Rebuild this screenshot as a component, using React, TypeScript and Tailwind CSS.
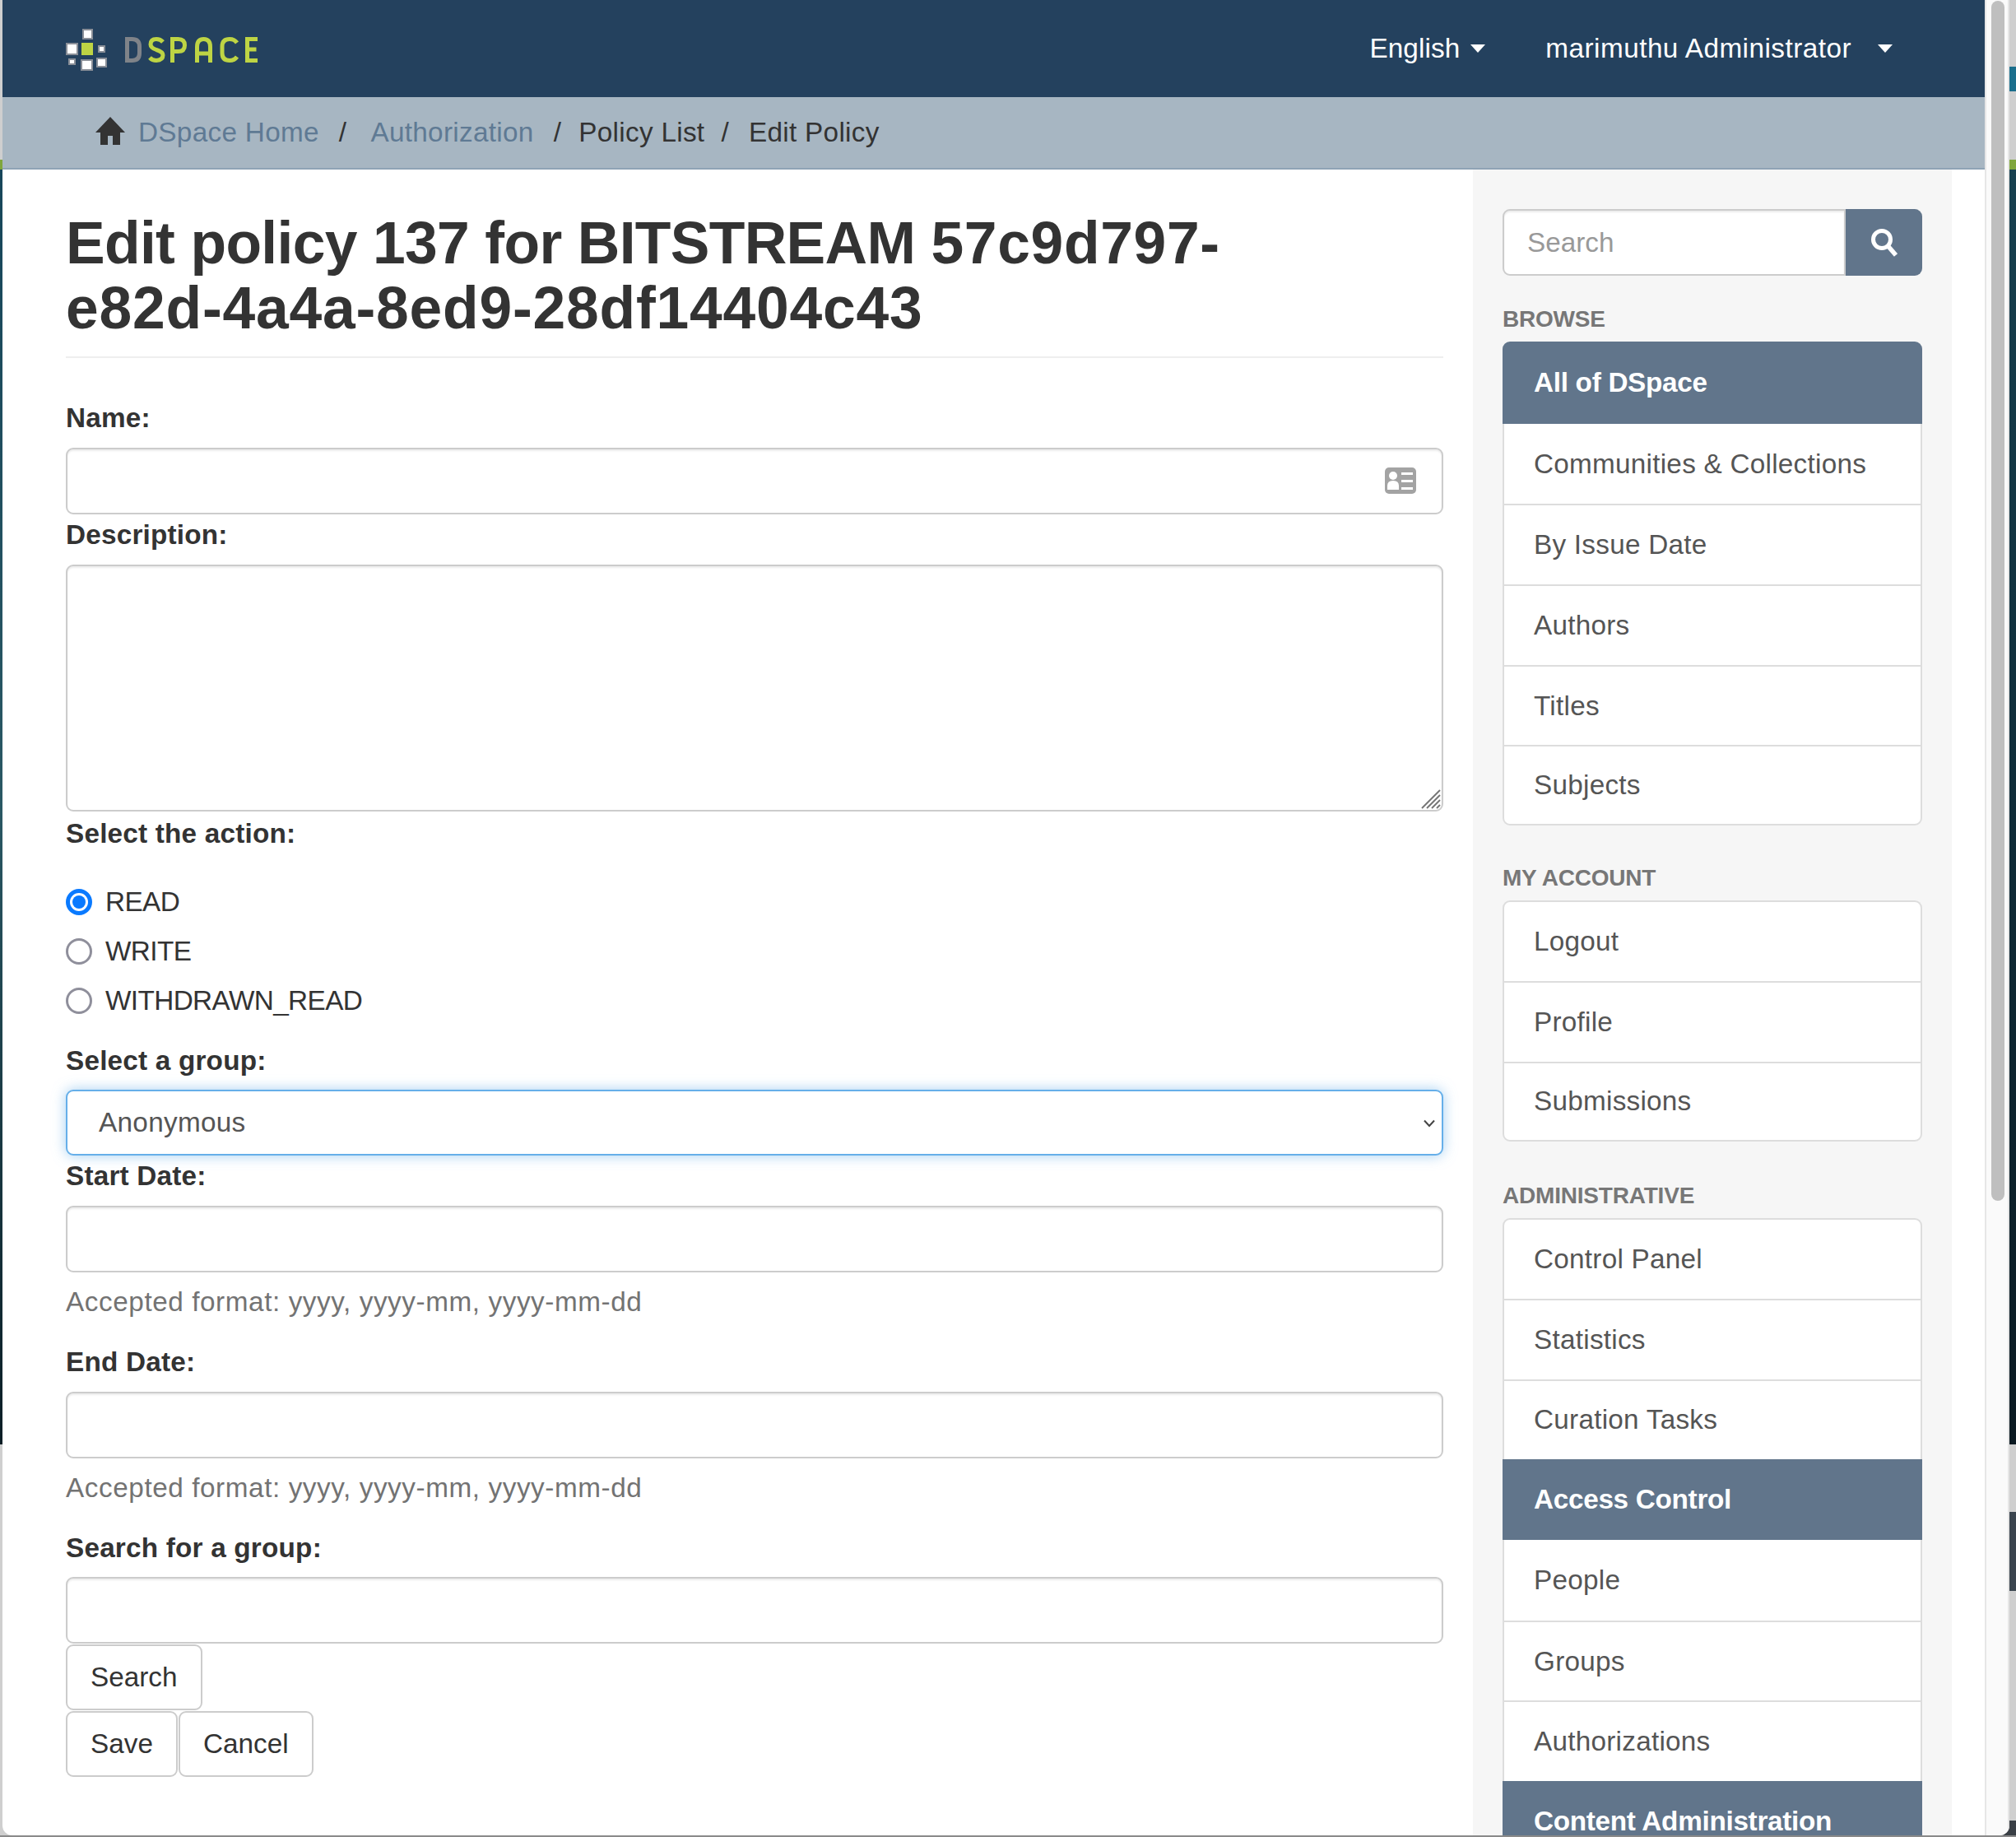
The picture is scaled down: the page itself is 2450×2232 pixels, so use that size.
import React, { FC } from "react";

const font = "font-['Liberation_Sans',Arial,sans-serif]";

const Logo: FC = () => (
  <svg width="240" height="60" viewBox="0 0 240 60" className="block mt-[2px]">
    <rect x="21" y="6" width="11" height="11" fill="#fff" stroke="#8a8f98" strokeWidth="2" />
    <rect x="1" y="23" width="13" height="13" fill="#fff" stroke="#8a8f98" strokeWidth="2" />
    <rect x="19" y="22" width="14" height="15" fill="#bed444" />
    <rect x="40" y="26" width="7" height="7" fill="#fff" stroke="#8a8f98" strokeWidth="2" />
    <rect x="4" y="42" width="7" height="6" fill="#fff" stroke="#8a8f98" strokeWidth="2" />
    <rect x="19" y="43" width="13" height="12" fill="#fff" stroke="#8a8f98" strokeWidth="2" />
    <rect x="38" y="41" width="11" height="10" fill="#fff" stroke="#8a8f98" strokeWidth="2" />
    <path d="M74.500 17.500h6q9 0 9 9v8q0 9-9 9h-6z" fill="none" stroke="#7f8389" strokeWidth="5" />
    <path d="M118 21q-3-3.500-8-3.500-7 0-7 6.500 0 4 7 6.500 8 2.500 8 6.500 0 6-8 6.500-5 0-8-3.500" fill="none" stroke="#bed444" strokeWidth="5" />
    <path d="M129.500 46V17.500h7q8 0 8 7.500t-8 7.500h-7" fill="none" stroke="#bed444" strokeWidth="5" />
    <path d="M159.500 46V27q0-9.500 8-9.500t8 9.500v19M159.500 35h16" fill="none" stroke="#bed444" strokeWidth="5" />
    <path d="M208 22q-3-4.500-9-4.500-9 0-9 9v8q0 9 9 9 6 0 9-4.500" fill="none" stroke="#bed444" strokeWidth="5" />
    <path d="M233 17.500h-12.500v26h12.500M220.500 30h11" fill="none" stroke="#bed444" strokeWidth="5" />
  </svg>
);

const Caret: FC = () => (
  <span className="block w-0 h-0 border-x-[9px] border-x-transparent border-t-[10px] border-t-white" />
);

const Breadcrumbs: FC = () => (
  <div className="h-[88px] bg-[#a7b6c2] border-b-2 border-[#8fa3b5] flex items-center pl-[113px] text-[33.300px] leading-none tracking-[0.3px]">
    <svg width="36" height="34" viewBox="0 0 36 34" className="mr-[16px] mb-[4px]">
      <path d="M18 0 36 19H30V34H21V23H15V34H6V19H0z" fill="#333" />
    </svg>
    <span className="text-[#5f7a94]">DSpace Home</span>
    <span className="text-[#333] ml-[24px] mr-[29px]">/</span>
    <span className="text-[#5f7a94]">Authorization</span>
    <span className="text-[#333] ml-[24px] mr-[21px]">/</span>
    <span className="text-[#333]">Policy List</span>
    <span className="text-[#333] ml-[20px] mr-[24px]">/</span>
    <span className="text-[#333]">Edit Policy</span>
  </div>
);

const TextField: FC<{ icon?: boolean }> = ({ icon }) => (
  <div className="relative h-[81px] rounded-[9px] border-2 border-[#ccc] bg-white shadow-[inset_0_2px_2px_rgba(0,0,0,0.075)]">
    {icon && (
      <svg width="38" height="32" viewBox="0 0 38 32" className="absolute right-[31px] top-[22px]">
        <rect width="38" height="32" rx="5" fill="#a3a3a3" />
        <circle cx="10" cy="10" r="5" fill="#fff" />
        <path d="M3 27v-5q0-6 7-6t7 6v5z" fill="#fff" />
        <path d="M20 6h14v3H20zM20 15h14v3H20zM20 24h14v3H20z" fill="#fff" />
      </svg>
    )}
  </div>
);

const FieldLabel: FC<{ children: React.ReactNode; className?: string }> = ({ children, className }) => (
  <div className={`font-bold text-[33.300px] leading-[36px] tracking-[0.2px] text-[#333] ${className ?? ""}`}>{children}</div>
);

const Radio: FC<{ label: string; checked?: boolean }> = ({ label, checked }) => (
  <div className="h-[60px] flex items-center text-[33.300px] leading-none tracking-[-0.6px] text-[#333]">
    {checked ? (
      <span className="w-[32px] h-[32px] rounded-full bg-white border-[5px] border-[#0a7aff] flex items-center justify-center">
        <span className="w-[16px] h-[16px] rounded-full bg-[#0a7aff]" />
      </span>
    ) : (
      <span className="w-[32px] h-[32px] rounded-full bg-white border-[3px] border-[#8f8f9b]" />
    )}
    <span className="ml-[16px]">{label}</span>
  </div>
);

const Btn: FC<{ label: string }> = ({ label }) => (
  <div className="h-[80px] px-[28px] flex items-center rounded-[9px] border-2 border-[#ccc] bg-white text-[33.300px] text-[#333]">
    {label}
  </div>
);

const HelpText: FC = () => (
  <div className="text-[33.300px] leading-[36px] tracking-[0.57px] text-[#737373]">Accepted format: yyyy, yyyy-mm, yyyy-mm-dd</div>
);

const MainForm: FC = () => (
  <div className="w-[1787px] pl-[77px] pr-[36px]">
    <h1 className="pt-[50px] font-bold text-[71.400px] leading-[79px] text-[#333] border-b-2 border-[#eee] pb-[19px]">
      <span className="tracking-[-0.65px]">Edit policy 137 for BITSTREAM </span>
      <span className="tracking-[0.65px]">57c9d797-</span>
      <br />
      <span className="tracking-[0.8px]">e82d-4a4a-8ed9-28df14404c43</span>
    </h1>
    <FieldLabel className="mt-[55px]">Name:</FieldLabel>
    <div className="mt-[18px]"><TextField icon /></div>
    <FieldLabel className="mt-[7px]">Description:</FieldLabel>
    <div className="mt-[18px] relative h-[300px] rounded-[9px] border-2 border-[#ccc] bg-white shadow-[inset_0_2px_2px_rgba(0,0,0,0.075)]">
      <svg width="26" height="26" viewBox="0 0 26 26" className="absolute right-0 bottom-0">
        <path d="M2 24 24 2M8 24 24 8M14 24 24 14M20 24 24 20" stroke="#777" strokeWidth="2" fill="none" />
      </svg>
    </div>
    <FieldLabel className="mt-[9px]">Select the action:</FieldLabel>
    <div className="mt-[35px]">
      <Radio label="READ" checked />
      <Radio label="WRITE" />
      <Radio label="WITHDRAWN_READ" />
    </div>
    <FieldLabel className="mt-[25px]">Select a group:</FieldLabel>
    <div className="mt-[17px] relative h-[80px] rounded-[9px] border-2 border-[#66afe9] bg-white shadow-[0_0_16px_rgba(102,175,233,0.6)] flex items-center pl-[38px] text-[33.300px] tracking-[0.3px] text-[#555]">
      Anonymous
      <svg width="14" height="10" viewBox="0 0 14 10" className="absolute right-[8px] top-[34px]">
        <path d="M1 1.500 7 8l6-6.500" fill="none" stroke="#444" strokeWidth="2" />
      </svg>
    </div>
    <FieldLabel className="mt-[7px]">Start Date:</FieldLabel>
    <div className="mt-[18px]"><TextField /></div>
    <div className="mt-[18px]"><HelpText /></div>
    <FieldLabel className="mt-[37px]">End Date:</FieldLabel>
    <div className="mt-[18px]"><TextField /></div>
    <div className="mt-[18px]"><HelpText /></div>
    <FieldLabel className="mt-[37px]">Search for a group:</FieldLabel>
    <div className="mt-[17px]"><TextField /></div>
    <div className="mt-[1px] flex"><Btn label="Search" /></div>
    <div className="mt-[1px] flex gap-[1px]">
      <Btn label="Save" />
      <Btn label="Cancel" />
    </div>
  </div>
);

type Item = { label: string; active?: boolean };

const NavGroup: FC<{ title: string; items: Item[]; open?: boolean }> = ({ title, items, open }) => (
  <div>
    <div className="h-[36px] leading-[36px] font-bold text-[28px] text-[#777] uppercase tracking-[-0.2px]">{title}</div>
    <div className="mt-[9px]">
      {items.map((it, idx) => {
        const first = idx === 0;
        const last = idx === items.length - 1 && !open;
        return (
          <div
            key={it.label}
            className={`${it.active && first ? "h-[99.700px]" : "h-[97.700px]"} flex items-center text-[33.300px] ${first ? "rounded-t-[9px]" : ""} ${last ? "rounded-b-[9px]" : ""} ${
              it.active
                ? "pl-[38px] bg-[#61758b] text-white font-bold tracking-[-0.3px]"
                : `pl-[36px] bg-white text-[#555] tracking-[0.25px] border-x-2 border-[#ddd] ${last ? "border-b-2" : ""} ${
                    idx === 0 || !items[idx - 1].active ? "border-t-2" : ""
                  }`
            }`}
          >
            {it.label}
          </div>
        );
      })}
    </div>
  </div>
);

const Sidebar: FC = () => (
  <div className="w-[582px] h-full bg-[#f6f6f6] pl-[36px] pr-[36px] overflow-hidden">
    <div className="mt-[48px] flex h-[81px]">
      <div className="flex-1 rounded-l-[9px] border-2 border-[#ccc] bg-white flex items-center pl-[28px] text-[33.300px] text-[#999] shadow-[inset_0_2px_2px_rgba(0,0,0,0.075)]">
        Search
      </div>
      <div className="w-[93px] rounded-r-[9px] bg-[#61758b] flex items-center justify-center">
        <svg width="34" height="36" viewBox="0 0 34 36">
          <circle cx="14" cy="14" r="10.500" fill="none" stroke="#fff" strokeWidth="5" />
          <path d="M21.500 22 31 33" fill="none" stroke="#fff" strokeWidth="5.500" />
        </svg>
      </div>
    </div>
    <div className="mt-[35px]">
      <NavGroup
        title="Browse"
        items={[
          { label: "All of DSpace", active: true },
          { label: "Communities & Collections" },
          { label: "By Issue Date" },
          { label: "Authors" },
          { label: "Titles" },
          { label: "Subjects" },
        ]}
      />
    </div>
    <div className="mt-[46px]">
      <NavGroup title="My Account" items={[{ label: "Logout" }, { label: "Profile" }, { label: "Submissions" }]} />
    </div>
    <div className="mt-[48px]">
      <NavGroup
        title="Administrative"
        open
        items={[
          { label: "Control Panel" },
          { label: "Statistics" },
          { label: "Curation Tasks" },
          { label: "Access Control", active: true },
          { label: "People" },
          { label: "Groups" },
          { label: "Authorizations" },
          { label: "Content Administration", active: true },
        ]}
      />
    </div>
  </div>
);

export default function App() {
  return (
    <div className={`relative w-[2450px] h-[2232px] overflow-hidden bg-[#cfcfcf] ${font}`}>
      {/* desktop showing behind the browser window */}
      <div className="absolute left-0 top-[194px] w-[3px] h-[12px] bg-[#7fa63c]" />
      <div className="absolute left-0 top-[206px] w-[3px] h-[1549px] bg-gradient-to-b from-[#17465a] via-[#2a5864] to-[#0b1e26]" />
      <div className="absolute right-0 top-[81px] w-[8px] h-[30px] bg-[#1a6e8c]" />
      <div className="absolute right-0 top-[194px] w-[8px] h-[12px] bg-[#7fa63c]" />
      <div className="absolute right-0 top-[206px] w-[8px] h-[1549px] bg-gradient-to-b from-[#17404f] via-[#0f2c38] to-[#0b1a22]" />
      <div className="absolute right-0 top-[1837px] w-[8px] h-[96px] bg-[#3a444e]" />
      <div className="absolute right-0 bottom-0 w-[30px] h-[20px] bg-[#3a3f45]" />
      <div className="absolute inset-x-0 bottom-0 h-[2px] bg-[#8a8a8a]" />

      {/* browser window */}
      <div className="absolute left-[3px] top-0 w-[2439px] h-[2230px] bg-white rounded-b-[12px] overflow-hidden flex">
        <div className="w-[2409px] h-full flex flex-col">
          <div className="h-[118px] bg-[#24415e] flex items-center justify-between pl-[77px] pr-[112px] text-[33.300px] text-white">
            <Logo />
            <div className="flex items-center">
              <span className="tracking-[0.1px]">English</span>
              <span className="ml-[13px] mr-[73px]"><Caret /></span>
              <span className="tracking-[0.47px]">marimuthu Administrator</span>
              <span className="ml-[32px]"><Caret /></span>
            </div>
          </div>
          <Breadcrumbs />
          <div className="flex-1 flex min-h-0">
            <MainForm />
            <Sidebar />
            <div className="flex-1 bg-white" />
          </div>
        </div>
        <div className="flex-1 bg-[#fafafa] border-x-2 border-[#e6e6e6] pl-[6px] pt-[1px]">
          <div className="w-[16px] h-[1458px] rounded-full bg-[#bfbfbf]" />
        </div>
      </div>
    </div>
  );
}
